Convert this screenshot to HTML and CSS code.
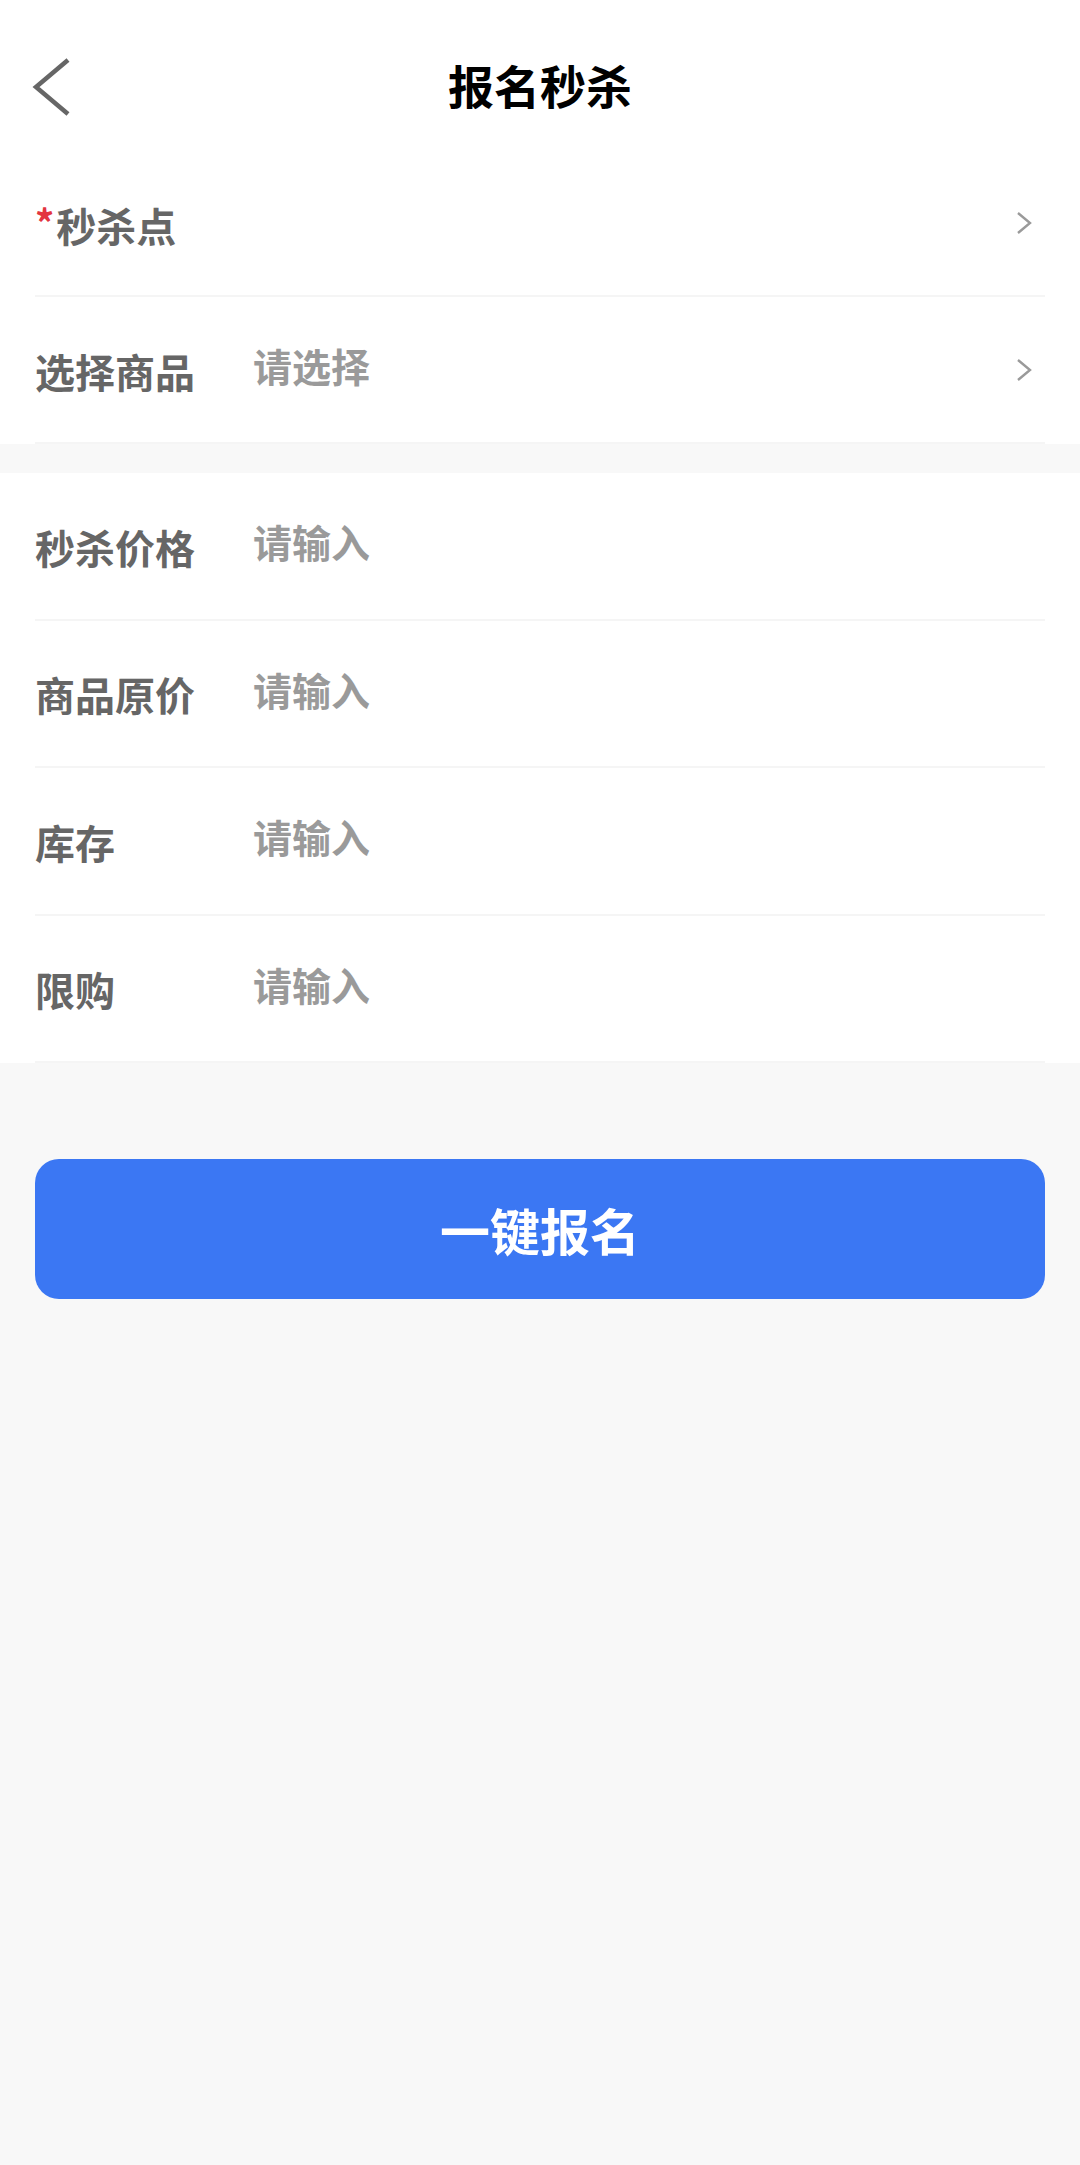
FILE: index.html
```html
<!DOCTYPE html>
<html lang="zh-CN">
<head>
<meta charset="utf-8">
<title>报名秒杀</title>
<link rel="stylesheet" href="styles.css">
</head>
<body>
<div class="page">
  <header class="nav">
    <span class="back">
      <svg width="40" height="60" viewBox="0 0 40 60"><polyline points="36,3 4,30 36,57" fill="none" stroke="#666" stroke-width="4.5" stroke-linejoin="miter"/></svg>
    </span>
    <h1 class="title">报名秒杀</h1>
  </header>

  <section class="group">
    <div class="row">
      <span class="label"><span class="req">*</span>秒杀点</span>
      <span class="value"></span>
      <svg class="chev" width="16" height="24" viewBox="0 0 16 24"><polyline points="2,2 14,12 2,22" fill="none" stroke="#9a9a9a" stroke-width="2.4"/></svg>
    </div>
    <div class="row">
      <span class="label">选择商品</span>
      <span class="value">请选择</span>
      <svg class="chev" width="16" height="24" viewBox="0 0 16 24"><polyline points="2,2 14,12 2,22" fill="none" stroke="#9a9a9a" stroke-width="2.4"/></svg>
    </div>
  </section>

  <section class="group group-2">
    <div class="row">
      <span class="label">秒杀价格</span>
      <span class="value">请输入</span>
    </div>
    <div class="row">
      <span class="label">商品原价</span>
      <span class="value">请输入</span>
    </div>
    <div class="row">
      <span class="label">库存</span>
      <span class="value">请输入</span>
    </div>
    <div class="row">
      <span class="label">限购</span>
      <span class="value">请输入</span>
    </div>
  </section>

  <div class="actions">
    <button class="submit">一键报名</button>
  </div>
</div>
</body>
</html>
```

FILE: styles.css
```css
* { box-sizing: border-box; }
html, body { margin: 0; padding: 0; }
body {
  background: #f8f8f8;
  font-family: "Noto Sans CJK SC", "Noto Sans", sans-serif;
}
.page {
  width: 1080px;
  min-height: 2165px;
  background: #f8f8f8;
}
.nav {
  height: 150px;
  background: #fff;
  display: flex;
  align-items: center;
  justify-content: center;
  position: relative;
  padding-top: 18px;
}
.back {
  position: absolute;
  left: 32px;
  top: 57px;
  width: 40px;
  height: 60px;
  display: flex;
}
.title {
  margin: 0;
  font-size: 46px;
  font-weight: 700;
  color: #000;
  line-height: 1;
}
.group {
  background: #fff;
  padding: 0 35px;
}
.group-2 { margin-top: 29px; }
.group-2 .row { height: 147.5px; }
.row {
  height: 147px;
  display: flex;
  align-items: center;
  border-bottom: 2px solid #f5f5f5;
}
.label {
  width: 218px;
  flex: none;
  font-size: 40px;
  font-weight: 700;
  color: #666;
  line-height: 1;
  padding-top: 2px;
}
.req {
  color: #e3343f;
  font-size: 38px;
  margin-right: 2px;
  vertical-align: 4px;
}
.value {
  flex: 1;
  font-size: 39px;
  font-weight: 700;
  color: #9a9a9a;
  line-height: 1;
  margin-bottom: 8px;
}
.chev {
  flex: none;
  margin-right: 13px;
}
.actions {
  padding: 96px 35px 0;
}
.submit {
  width: 100%;
  height: 140px;
  border: none;
  border-radius: 24px;
  background: #3b77f3;
  color: #fff;
  font-family: "Noto Sans CJK SC", "Noto Sans", sans-serif;
  font-size: 50px;
  font-weight: 700;
  display: flex;
  align-items: center;
  justify-content: center;
  padding: 0;
}
```
